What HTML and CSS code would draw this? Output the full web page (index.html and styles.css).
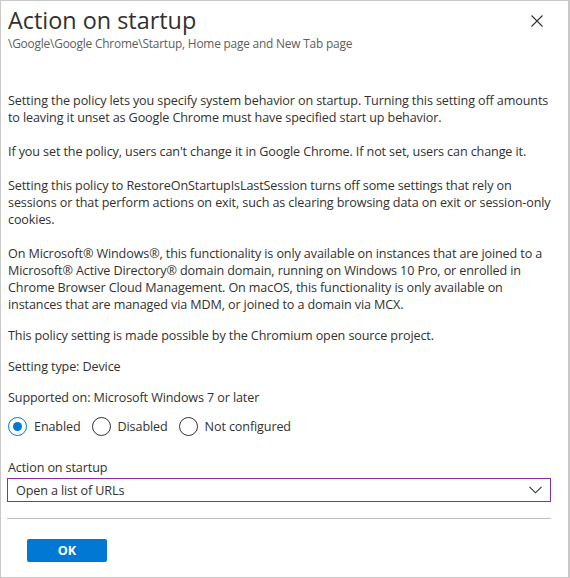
FILE: index.html
```html
<!DOCTYPE html>
<html>
<head>
<meta charset="utf-8">
<link rel="stylesheet" href="styles.css">
</head>
<body>
<div class="panel">
  <header class="head">
    <div class="titles">
      <h1 class="title">Action on startup</h1>
      <div class="path">\Google\Google Chrome\Startup, Home page and New Tab page</div>
    </div>
    <button class="close" aria-label="Close">
      <svg width="12" height="12" viewBox="0 0 12 12"><path d="M0.5 0.5L11.5 11.5M11.5 0.5L0.5 11.5" stroke="#323130" stroke-width="1.1" fill="none"/></svg>
    </button>
  </header>
  <div class="body">
    <p class="para">Setting the policy lets you specify system behavior on startup. Turning this setting off amounts to leaving it unset as Google Chrome must have specified start up behavior.</p>
    <p class="para">If you set the policy, users can't change it in Google Chrome. If not set, users can change it.</p>
    <p class="para">Setting this policy to RestoreOnStartupIsLastSession turns off some settings that rely on sessions or that perform actions on exit, such as clearing browsing data on exit or session-only cookies.</p>
    <p class="para small-gap">On Microsoft® Windows®, this functionality is only available on instances that are joined to a Microsoft® Active Directory® domain domain, running on Windows 10 Pro, or enrolled in Chrome Browser Cloud Management. On macOS, this functionality is only available on instances that are managed via MDM, or joined to a domain via MCX.</p>
    <p class="para small-gap">This policy setting is made possible by the Chromium open source project.</p>
    <p class="para small-gap">Setting type: Device</p>
    <p class="para small-gap">Supported on: Microsoft Windows 7 or later</p>
    <div class="radios">
      <label class="radio"><span class="dot on"></span>Enabled</label>
      <label class="radio"><span class="dot"></span>Disabled</label>
      <label class="radio"><span class="dot"></span>Not configured</label>
    </div>
    <div class="field">
      <div class="label">Action on startup</div>
      <div class="select">
        <span>Open a list of URLs</span>
        <svg width="13" height="8" viewBox="0 0 13 8"><path d="M0.5 0.8L6.5 6.8L12.5 0.8" stroke="#323130" stroke-width="1.1" fill="none"/></svg>
      </div>
    </div>
    <hr class="sep">
    <div class="actions">
      <button class="ok">OK</button>
    </div>
  </div>
</div>
</body>
</html>
```
FILE: styles.css
```css
html, body {
  margin: 0;
  padding: 0;
  background: #fff;
}
body {
  font-family: "Open Sans", "Noto Sans", sans-serif;
  color: #323130;
}
.panel {
  box-sizing: border-box;
  width: 570px;
  height: 578px;
  border: 1px solid #c8c8c8;
  border-right-width: 2px;
  padding: 0 17px 0 6px;
}
.head {
  display: flex;
  justify-content: space-between;
  align-items: flex-start;
}
.title {
  margin: 4px 0 0 1px;
  font-size: 23.4px;
  font-weight: 400;
  line-height: 30px;
  color: #323130;
}
.path {
  margin: 1px 0 0 1px;
  font-size: 11.9px;
  line-height: 15px;
  color: #605e5c;
  letter-spacing: -0.2px;
}
.close {
  margin: 14px 8px 0 0;
  border: 0;
  background: none;
  padding: 0;
  width: 12px;
  height: 12px;
  display: flex;
}
.body {
  padding-top: 41px;
  font-size: 12.6px;
  line-height: 17px;
  letter-spacing: -0.12px;
}
.para {
  margin: 0 0 17px 1px;
}
.para.small-gap {
  margin-bottom: 14px;
}
.radios {
  display: flex;
  gap: 10px;
  margin-top: -4px;
  height: 20px;
  align-items: center;
}
.radio {
  display: flex;
  align-items: center;
  gap: 7px;
  font-size: 12.6px;
}
.dot {
  box-sizing: border-box;
  width: 19px;
  height: 19px;
  border: 1px solid #323130;
  border-radius: 50%;
  display: inline-block;
  position: relative;
  margin-left: 1px;
}
.dot.on {
  border-color: #0078d4;
}
.dot.on::after {
  content: "";
  position: absolute;
  left: 4px;
  top: 4px;
  width: 9px;
  height: 9px;
  border-radius: 50%;
  background: #0078d4;
}
.field {
  margin-top: 23px;
}
.label {
  font-size: 12.6px;
  line-height: 17px;
  margin-left: 1px;
}
.select {
  box-sizing: border-box;
  margin-top: 2px;
  height: 24px;
  border: 1px solid #8a2da5;
  display: flex;
  align-items: center;
  justify-content: space-between;
  padding: 0 8px 0 8px;
  font-size: 12.6px;
}
.sep {
  margin: 16px 0 0 0;
  border: 0;
  border-top: 1px solid #bdbdbd;
  height: 0;
}
.actions {
  padding: 20px 0 0 20px;
}
.ok {
  width: 80px;
  height: 23px;
  border: 0;
  border-radius: 2px;
  background: #0078d4;
  color: #fff;
  font-family: "Open Sans", sans-serif;
  font-weight: 700;
  font-size: 12.6px;
  padding: 0;
}
```
